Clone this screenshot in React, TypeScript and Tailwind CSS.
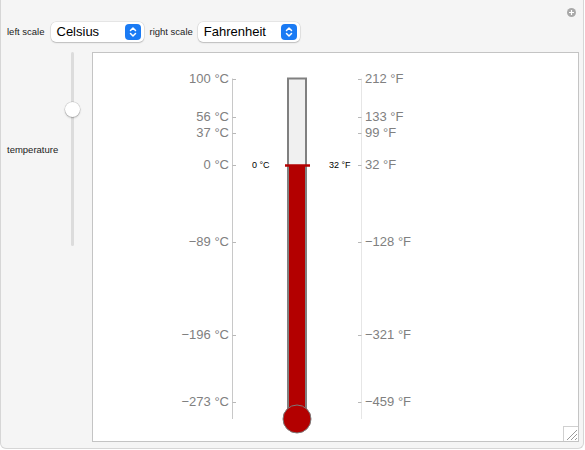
import React from 'react';

const TOP = 77.5;
const BOTTOM_T = 401;
const yOf = (c: number) => TOP + ((100 - c) * (BOTTOM_T - TOP)) / 373;

const marks = [
  { c: 100, left: '100 °C', right: '212 °F' },
  { c: 56, left: '56 °C', right: '133 °F' },
  { c: 37, left: '37 °C', right: '99 °F' },
  { c: 0, left: '0 °C', right: '32 °F' },
  { c: -89, left: '\u221289 °C', right: '\u2212128 °F' },
  { c: -196, left: '\u2212196 °C', right: '\u2212321 °F' },
  { c: -273, left: '\u2212273 °C', right: '\u2212459 °F' },
];

function Stepper() {
  return (
    <span className="flex h-[16px] w-[16px] items-center justify-center rounded-[4px] bg-[#1b7bf4]">
      <svg width="8" height="12" viewBox="0 0 8 12" fill="none" stroke="white" strokeWidth="1.5" strokeLinecap="round" strokeLinejoin="round">
        <path d="M1.5 4.5 L4 2 L6.5 4.5" />
        <path d="M1.5 7.5 L4 10 L6.5 7.5" />
      </svg>
    </span>
  );
}

function Popup({ label, width }: { label: string; width: string }) {
  return (
    <div className={`flex h-[20px] ${width} items-center justify-between rounded-[5px] bg-white pl-[6px] pr-[3px] shadow-[0_0_0_0.5px_rgba(0,0,0,0.12),0_1px_1.5px_rgba(0,0,0,0.18)]`}>
      <span className="text-[13px] text-black">{label}</span>
      <Stepper />
    </div>
  );
}

function Thermometer() {
  const zeroY = Math.round(yOf(0));
  return (
    <svg width="486" height="390" viewBox="92 52 486 390" className="block">
      {/* left axis */}
      <line x1="231.5" y1={TOP} x2="231.5" y2="418" stroke="#c8c8c8" strokeWidth="1" />
      {/* right axis */}
      <line x1="360.5" y1={TOP} x2="360.5" y2="418" stroke="#e6e6e6" strokeWidth="1" />
      {marks.map((m) => {
        const y = Math.round(yOf(m.c)) + 0.5;
        return (
          <g key={m.c}>
            <line x1="231.5" y1={y} x2="235" y2={y} stroke="#b8b8b8" strokeWidth="1" />
            <line x1="357" y1={y} x2="360.5" y2={y} stroke="#b8b8b8" strokeWidth="1" />
            <text x="228" y={y} dy="0.3em" textAnchor="end" fontSize="13" fill="#808080" fontFamily="'Liberation Sans', Arial, sans-serif">
              {m.left}
            </text>
            <text x="364" y={y} dy="0.3em" textAnchor="start" fontSize="13" fill="#808080" fontFamily="'Liberation Sans', Arial, sans-serif">
              {m.right}
            </text>
          </g>
        );
      })}
      {/* tube */}
      <rect x="287" y={TOP} width="18" height={412 - TOP} fill="#f0f0f0" stroke="#808080" strokeWidth="2" />
      <rect x="288" y={zeroY} width="16" height={412 - zeroY} fill="#b30000" />
      <circle cx="296" cy="418" r="14" fill="#b30000" stroke="#7a7a7a" strokeWidth="1" />
      <line x1="284" y1={zeroY + 0.5} x2="309" y2={zeroY + 0.5} stroke="#b30000" strokeWidth="2.5" />
      {/* current value labels */}
      <text x="251" y={zeroY + 0.5} dy="0.3em" fontSize="9" fill="#000" fontFamily="'Liberation Sans', Arial, sans-serif">
        0 °C
      </text>
      <text x="328" y={zeroY + 0.5} dy="0.3em" fontSize="9" fill="#000" fontFamily="'Liberation Sans', Arial, sans-serif">
        32 °F
      </text>
    </svg>
  );
}

export default function App() {
  return (
    <div className="relative h-[450px] w-[585px] bg-white" style={{ fontFamily: "'Liberation Sans', Arial, sans-serif" }}>
      <div className="relative h-[449px] w-[584px] rounded-b-[6px] border border-t-0 border-[#d6d6d6] bg-[#f5f5f5]">
        {/* plus icon */}
        <span className="absolute right-[7px] top-[8px] flex h-[9px] w-[9px] items-center justify-center rounded-full bg-[#a9a9a9]">
          <svg width="5" height="5" viewBox="0 0 5 5" stroke="white" strokeWidth="1.2">
            <path d="M2.5 0 V5 M0 2.5 H5" />
          </svg>
        </span>

        {/* controls */}
        <div className="flex items-center pl-[6px] pt-[22px]">
          <span className="text-[9.5px] text-[#222]">left scale</span>
          <div className="ml-[6px]">
            <Popup label="Celsius" width="w-[93px]" />
          </div>
          <span className="ml-[6px] text-[9.5px] text-[#222]">right scale</span>
          <div className="ml-[5px]">
            <Popup label="Fahrenheit" width="w-[102px]" />
          </div>
        </div>

        {/* main row */}
        <div className="mt-[10px] flex">
          <div className="flex h-[196px] w-[91px] items-center">
            <span className="pl-[6px] text-[9.5px] text-[#222]">temperature</span>
            <div className="relative ml-[12px] h-[194px] w-[4px] self-start">
              <div className="absolute left-[1px] top-0 h-full w-[3px] rounded-full bg-[#dcdcdc]" />
              <div className="absolute left-[-5px] top-[50px] h-[15px] w-[15px] rounded-full bg-white shadow-[0_0_0_0.5px_rgba(0,0,0,0.15),0_1px_2px_rgba(0,0,0,0.25)]" />
            </div>
          </div>
          <div className="relative h-[390px] w-[487px] border border-[#c4c4c4] bg-white">
            <Thermometer />
            <div className="absolute bottom-0 right-0 h-[15px] w-[15px] border-l border-t border-[#d0d0d0] bg-white">
              <svg width="14" height="14" viewBox="0 0 14 14" stroke="#9a9a9a" strokeWidth="1">
                <path d="M3 13 L13 3 M7 13 L13 7 M11 13 L13 11" />
              </svg>
            </div>
          </div>
        </div>
      </div>
    </div>
  );
}
